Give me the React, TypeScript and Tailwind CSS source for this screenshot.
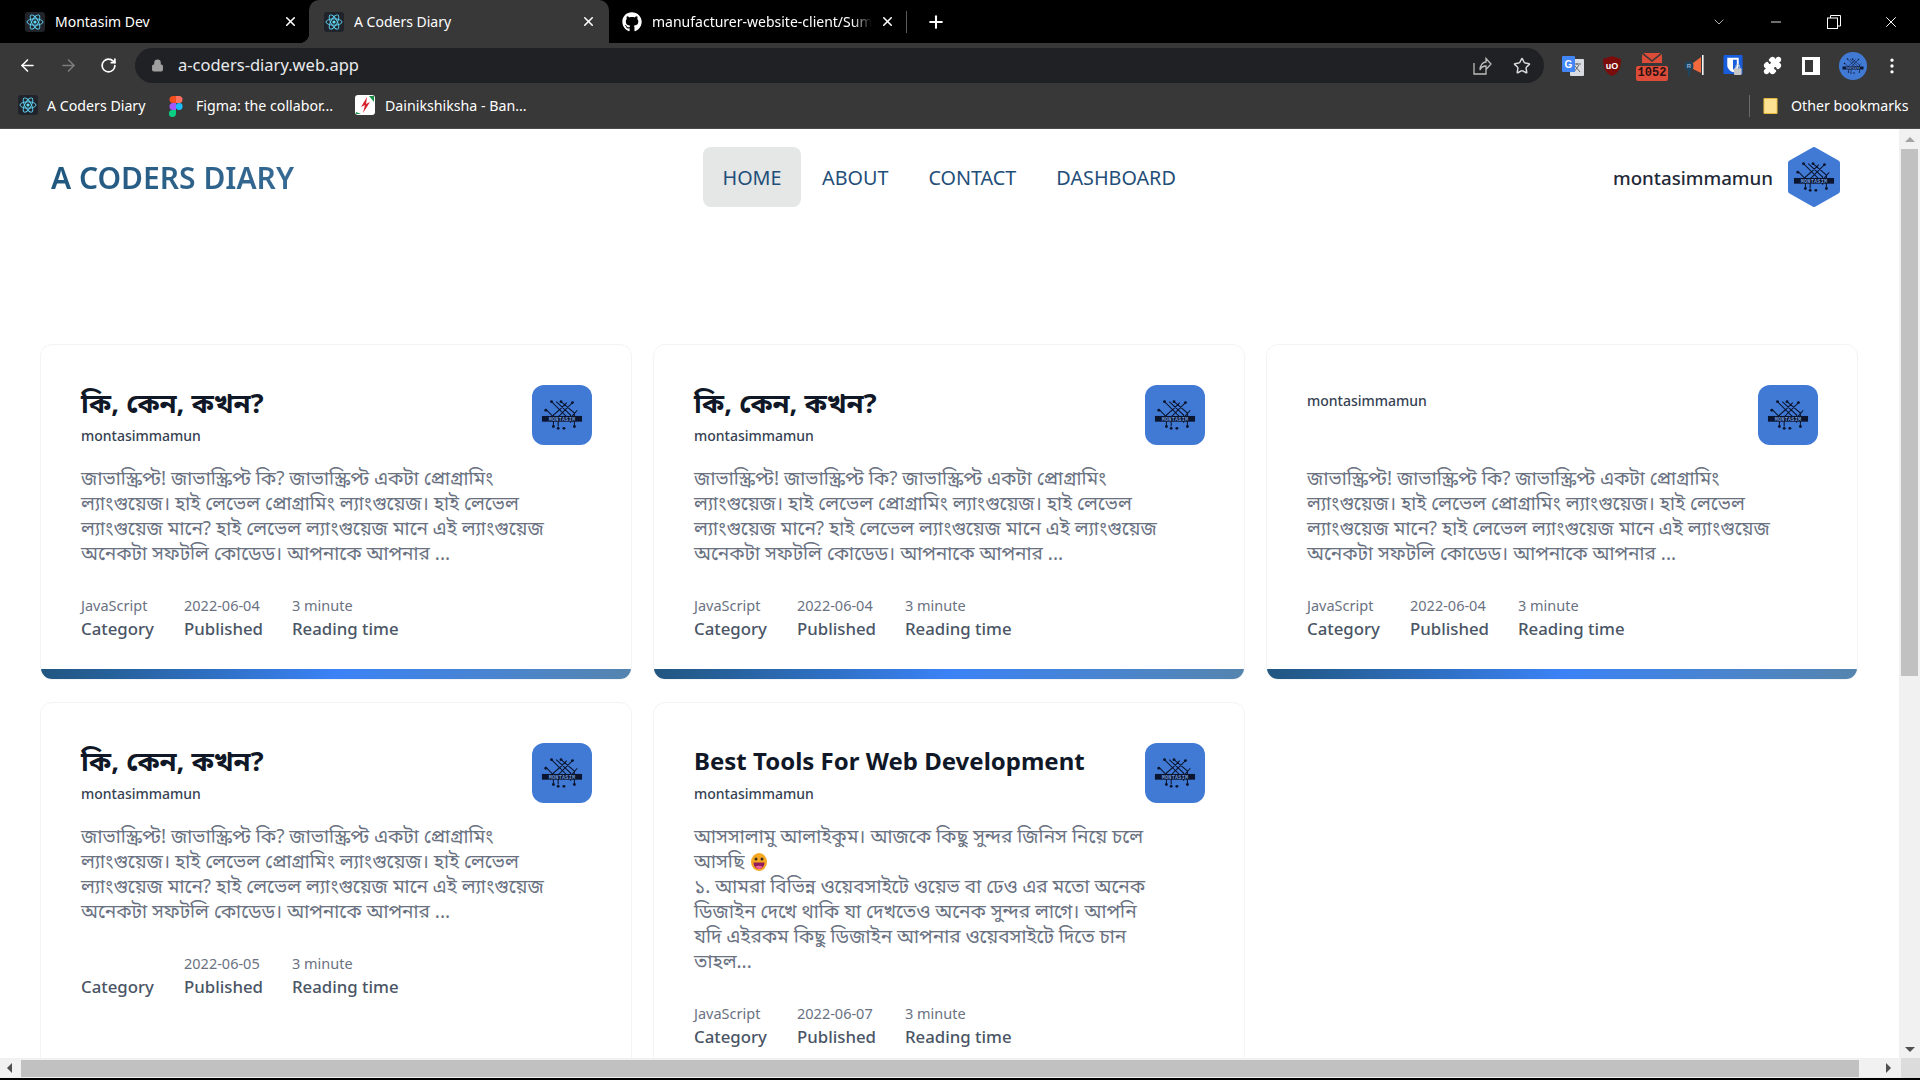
import * as React from 'react';
import { ArrowLeft, ArrowRight, RotateCw, Lock, X, Plus, Star, ChevronDown, Minus, Puzzle, MoreVertical } from 'lucide-react';
import { FaGithub } from 'react-icons/fa';

const uiFont = 'font-["Noto_Sans","Noto_Sans_Bengali","Lohit_Bengali","FreeSans",sans-serif]';

const AtomIcon = () => (
  <svg viewBox="0 0 20 20" className="h-5 w-5 shrink-0">
    <rect width="20" height="20" rx="3" fill="#20232a" />
    <g fill="none" stroke="#61dafb" strokeWidth="0.9">
      <ellipse cx="10" cy="10" rx="8" ry="3.2" />
      <ellipse cx="10" cy="10" rx="8" ry="3.2" transform="rotate(60 10 10)" />
      <ellipse cx="10" cy="10" rx="8" ry="3.2" transform="rotate(120 10 10)" />
    </g>
    <circle cx="10" cy="10" r="1.6" fill="#61dafb" />
  </svg>
);

const FigmaIcon = () => (
  <svg viewBox="0 0 14 22" className="h-[22px] w-[14px]">
    <path d="M7 1H4a3.5 3.5 0 0 0 0 7h3z" fill="#f24e1e" />
    <path d="M7 1h3a3.5 3.5 0 0 1 0 7H7z" fill="#ff7262" />
    <path d="M7 8H4a3.5 3.5 0 0 0 0 7h3z" fill="#a259ff" />
    <circle cx="10.2" cy="11.5" r="3.4" fill="#1abcfe" />
    <path d="M4 15h3v3.5A3.5 3.5 0 1 1 4 15z" fill="#0acf83" />
  </svg>
);

const DainikIcon = () => (
  <svg viewBox="0 0 20 20" className="h-5 w-5">
    <rect width="20" height="20" rx="3" fill="#fff" />
    <path d="M12 2 L6 12 L10 10 L8 18 L15 7 L11 9z" fill="#d81e28" />
    <path d="M14 1h5v6z" fill="#17914a" />
    <path d="M1 17l5 2H1z" fill="#17914a" />
  </svg>
);

// MONTASIM circuit logo, used on the avatars and the card thumbnails
const CircuitLogo = ({ className }: { className?: string }) => (
  <svg viewBox="0 0 44 32" className={className}>
    <g fill="none" stroke="#0b1530" strokeWidth="1.1">
      <path d="M11 2 L27 18 V22 M16 2 L31 16 V24 M21 2 L35 14 V27 M33 3 L24 12 L18 18 V28 M27 3 L20 10 L13 16 V27 M6 11 L13 18 M38 11 L32 18" />
    </g>
    <g fill="#0b1530">
      <circle cx="11" cy="2" r="1.5" />
      <circle cx="21" cy="2" r="1.5" />
      <circle cx="33" cy="3" r="1.5" />
      <circle cx="5" cy="11" r="1.5" />
      <circle cx="13" cy="28" r="1.5" />
      <circle cx="18" cy="30" r="1.5" />
      <circle cx="35" cy="28" r="1.5" />
      <circle cx="24" cy="30" r="1.5" />
    </g>
    <rect x="1" y="17" width="42" height="6" fill="#0b1530" />
    <text x="22" y="22" textAnchor="middle" fontSize="5.4" fontWeight="700" fontFamily="Liberation Mono, monospace" letterSpacing="0.25" fill="#6f97d8">
      MONTASIM
    </text>
  </svg>
);

const Tab = ({ icon, label, active, width, labelClass }: { icon: React.ReactNode; label: string; active?: boolean; width: string; labelClass?: string }) => (
  <div
    className={`relative flex h-[43px] shrink-0 items-center ${width} ${
      active
        ? "rounded-t-[10px] bg-[#383838] before:absolute before:bottom-0 before:left-[-10px] before:size-[10px] before:bg-[radial-gradient(circle_at_0_0,transparent_10px,#383838_10.5px)] before:content-[''] after:absolute after:bottom-0 after:right-[-10px] after:size-[10px] after:bg-[radial-gradient(circle_at_100%_0,transparent_10px,#383838_10.5px)] after:content-['']"
        : 'bg-black'
    }`}
  >
    {icon}
    <span className={`ml-[10px] flex-1 overflow-hidden whitespace-nowrap text-[14px] text-white ${labelClass ?? ''}`}>{label}</span>
    <X className="ml-2 h-[15px] w-[15px] shrink-0 text-white" strokeWidth={2.5} />
  </div>
);

const TabStrip = () => (
  <div className="flex h-[43px] shrink-0 items-center bg-black">
    <Tab width="w-[299px] ml-[10px] pl-[15px] pr-[11px]" icon={<AtomIcon />} label="Montasim Dev" />
    <Tab active width="w-[300px] pl-[15px] pr-[13px]" icon={<AtomIcon />} label="A Coders Diary" />
    <Tab
      width="w-[297px] pl-[13px] pr-[11px]"
      icon={<FaGithub className="h-5 w-5 shrink-0 text-white" />}
      label="manufacturer-website-client/Sum"
      labelClass="[mask-image:linear-gradient(to_left,transparent,black_20px)]"
    />
    <div className="h-[22px] w-px bg-[#5a5a5a]" />
    <Plus className="ml-[19px] h-[20px] w-[20px] text-white" strokeWidth={2.5} />
    <ChevronDown className="ml-[765px] h-[16px] w-[16px] text-[#d8d8d8]" strokeWidth={1.2} />
    <Minus className="ml-[41px] h-[16px] w-[16px] text-white" strokeWidth={1.3} />
    <svg viewBox="0 0 14 14" className="ml-[43px] h-[14px] w-[14px]" fill="none" stroke="#fff">
      <rect x="0.5" y="3" width="10" height="10.5" />
      <path d="M3.5 3V0.5h10V11h-3" />
    </svg>
    <X className="ml-[41px] h-[18px] w-[18px] text-white" strokeWidth={1.3} />
  </div>
);

const ToolbarExtensions = () => (
  <div className="flex items-center">
    {/* translate */}
    <svg viewBox="0 0 22 22" className="ml-[18px] h-[22px] w-[22px]">
      <rect x="8" y="4" width="14" height="17" rx="1" fill="#d9dde3" />
      <path d="M11 9h8M15 8v2M12 17l5-7M13 11l5 6" stroke="#666" fill="none" />
      <rect x="0" y="1" width="13" height="16" rx="1" fill="#4285f4" />
      <text x="6.5" y="12.5" textAnchor="middle" fontSize="10" fontWeight="700" fill="#fff" fontFamily="Liberation Sans, sans-serif">G</text>
    </svg>
    {/* ublock */}
    <svg viewBox="0 0 18 20" className="ml-[19px] h-[20px] w-[18px]">
      <path d="M9 0l9 3c0 8-2 14-9 17C2 17 0 11 0 3z" fill="#7a0c0c" />
      <text x="9" y="13" textAnchor="middle" fontSize="9" fontWeight="700" fill="#fff" fontFamily="Liberation Sans, sans-serif">uO</text>
    </svg>
    {/* mail + counter */}
    <div className="relative ml-[15px] h-[30px] w-[32px]">
      <svg viewBox="0 0 20 10" className="absolute left-[6px] top-[2px] h-[10px] w-[20px]">
        <path d="M0 0h20v10H0z" fill="#dd4b39" />
        <path d="M0 0l10 8 10-8" fill="none" stroke="#383838" strokeWidth="1.6" />
      </svg>
      <div className="absolute bottom-0 left-0 flex h-[15px] w-[32px] items-center justify-center rounded-[2px] bg-[#dd4b39] font-['Liberation_Mono',monospace] text-[12px] font-bold text-[#2a1210]">1052</div>
    </div>
    {/* megaphone */}
    <svg viewBox="0 0 20 22" className="ml-[16px] h-[22px] w-[20px]">
      <path d="M9 8l8-6v16l-8-4z" fill="#f26a3d" />
      <rect x="18" y="0" width="1.6" height="20" fill="#f5f5f5" />
      <circle cx="5" cy="11" r="4.5" fill="#1d4560" />
      <rect x="4" y="14" width="2" height="7" fill="#1d4560" />
      <text x="5" y="13" textAnchor="middle" fontSize="6" fontWeight="700" fill="#9ac" fontFamily="Liberation Sans, sans-serif">R</text>
    </svg>
    {/* bitwarden */}
    <svg viewBox="0 0 20 22" className="ml-[19px] h-[21px] w-[20px]">
      <rect width="20" height="20" rx="1" fill="#175ddc" />
      <path d="M4 3h12v8c0 3-3 6-6 7-3-1-6-4-6-7z" fill="#fff" />
      <path d="M10 5h4v6c0 2-2 3.500-4 4.500z" fill="#175ddc" />
      <rect x="11" y="14" width="8" height="7" rx="1" fill="#c8c8c8" />
      <path d="M13 14v-2a2 2 0 0 1 4 0v2" stroke="#c8c8c8" fill="none" />
    </svg>
    <Puzzle className="ml-[20px] h-[19px] w-[19px] fill-white text-white" />
    <div className="ml-[20px] h-[18px] w-[18px] border-[3px] border-r-[7px] border-white" />
    <div className="ml-[19px] flex h-[28px] w-[28px] items-center justify-center rounded-full bg-[#417ad4]">
      <CircuitLogo className="h-[16px] w-[22px]" />
    </div>
    <MoreVertical className="ml-[15px] h-[20px] w-[20px] text-white" />
  </div>
);

const Toolbar = () => (
  <div className="flex h-[43px] shrink-0 items-center bg-[#383838] pl-[18px] pt-[2px]">
    <ArrowLeft className="h-[19px] w-[19px] text-white" />
    <ArrowRight className="ml-[22px] h-[19px] w-[19px] text-[#7c7c7c]" />
    <RotateCw className="ml-[22px] h-[17px] w-[17px] text-white" strokeWidth={2.4} />
    <div className="ml-[18px] flex h-[35px] w-[1409px] items-center rounded-full bg-[#202124] pl-[16px] pr-[13px]">
      <Lock className="h-[13px] w-[13px] fill-[#a0a0a0] text-[#a0a0a0]" />
      <span className="ml-[14px] flex-1 text-[16.5px] text-[#e8eaed]">a-coders-diary.web.app</span>
      <svg viewBox="0 0 20 20" className="h-[20px] w-[20px]" fill="none" stroke="#bdbdbd" strokeWidth="1.3">
        <path d="M2 7v11h12v-4M8 14c0-5 3-8 6-8V2.500l5 5.500-5 5.500V10c-3 0-5 1-6 4z" />
      </svg>
      <Star className="ml-[21px] h-[18px] w-[18px] text-[#d8d8d8]" strokeWidth={2} />
    </div>
    <ToolbarExtensions />
  </div>
);

const BookmarkBar = () => (
  <div className="flex h-[43px] shrink-0 items-center border-b border-[#4a4a4a] bg-[#383838] pb-[3px] text-[14.2px] text-white">
    <div className="ml-[18px] flex w-[151px] items-center gap-[9px] whitespace-nowrap">
      <AtomIcon />
      A Coders Diary
    </div>
    <div className="flex w-[186px] items-center gap-[13px] whitespace-nowrap">
      <FigmaIcon />
      Figma: the collabor...
    </div>
    <div className="flex w-[1394px] items-center gap-[10px] whitespace-nowrap">
      <DainikIcon />
      Dainikshiksha - Ban...
    </div>
    <div className="h-[22px] w-px bg-[#6a6a6a]" />
    <svg viewBox="0 0 16 18" className="ml-[13px] h-[18px] w-[15px]">
      <path d="M1 1h14v16H1z" fill="#fde293" stroke="#e8b93a" />
    </svg>
    <span className="ml-[13px] whitespace-nowrap">Other bookmarks</span>
  </div>
);

const NavBar = () => (
  <nav className="flex h-[60px] items-center pr-[57px]">
    <a className="ml-[51px] w-[652px] bg-gradient-to-r from-[#20577f] to-[#5a8bb8] bg-clip-text text-[30px] font-semibold text-transparent">A CODERS DIARY</a>
    <div className="flex items-center text-[19.8px] text-[#1f4e79]">
      <a className="flex h-[60px] w-[98px] items-center justify-center rounded-lg bg-[#e5e6e6] pt-[2px]">HOME</a>
      <a className="ml-[1px] px-5 pt-[2px]">ABOUT</a>
      <a className="px-5 pt-[2px]">CONTACT</a>
      <a className="px-5 pt-[2px]">DASHBOARD</a>
    </div>
    <span className="ml-auto pt-[2px] text-[18.7px] font-medium text-[#1f2937]">montasimmamun</span>
    <div className="ml-[13px] grid h-[60px] w-[56px] place-items-center">
      <svg viewBox="0 0 56 60" className="col-start-1 row-start-1 h-[60px] w-[56px]">
        <path d="M28 3 L51 16 V44 L28 57 L5 44 V16 Z" fill="#417ad4" stroke="#417ad4" strokeWidth="6" strokeLinejoin="round" />
      </svg>
      <CircuitLogo className="col-start-1 row-start-1 h-[32px] w-[42px]" />
    </div>
  </nav>
);

const javascriptBody = (
  <>
    জাভাস্ক্রিপ্ট! জাভাস্ক্রিপ্ট কি? জাভাস্ক্রিপ্ট একটা প্রোগ্রামিং
    <br />
    ল্যাংগুয়েজ। হাই লেভেল প্রোগ্রামিং ল্যাংগুয়েজ। হাই লেভেল
    <br />
    ল্যাংগুয়েজ মানে? হাই লেভেল ল্যাংগুয়েজ মানে এই ল্যাংগুয়েজ
    <br />
    অনেকটা সফটলি কোডেড। আপনাকে আপনার ...
  </>
);

const toolsBody = (
  <>
    আসসালামু আলাইকুম। আজকে কিছু সুন্দর জিনিস নিয়ে চলে
    <br />
    আসছি{' '}
    <svg viewBox="0 0 16 18" className="ml-[2px] inline h-[18px] w-[16px] align-[-3px]">
      <ellipse cx="8" cy="9" rx="8" ry="9" fill="#f7a823" />
      <circle cx="5" cy="6" r="1.5" fill="#3a2a20" />
      <circle cx="11" cy="6" r="1.5" fill="#3a2a20" />
      <path d="M2.500 9.500h11c0 4-2.500 6.500-5.500 6.500s-5.500-2.500-5.500-6.500z" fill="#8e1f5c" />
      <path d="M4.500 13.500c2-1 5-1 7 0-1 1.500-2 2.500-3.500 2.500s-2.500-1-3.500-2.500z" fill="#f0609a" />
    </svg>
    <br />
    ১. আমরা বিভিন্ন ওয়েবসাইটে ওয়েভ বা ঢেও এর মতো অনেক
    <br />
    ডিজাইন দেখে থাকি যা দেখতেও অনেক সুন্দর লাগে। আপনি
    <br />
    যদি এইরকম কিছু ডিজাইন আপনার ওয়েবসাইটে দিতে চান
    <br />
    তাহল...
  </>
);

type Post = { title: string; body: React.ReactNode; category: string; date: string; latin?: boolean };

const posts: Post[] = [
  { title: 'কি, কেন, কখন?', body: javascriptBody, category: 'JavaScript', date: '2022-06-04' },
  { title: 'কি, কেন, কখন?', body: javascriptBody, category: 'JavaScript', date: '2022-06-04' },
  { title: '', body: javascriptBody, category: 'JavaScript', date: '2022-06-04' },
  { title: 'কি, কেন, কখন?', body: javascriptBody, category: '', date: '2022-06-05' },
  { title: 'Best Tools For Web Development', body: toolsBody, category: 'JavaScript', date: '2022-06-07', latin: true },
];

const Meta = ({ value, label, width }: { value: string; label: string; width: string }) => (
  <div className={`whitespace-nowrap ${width}`}>
    <p className="h-[20px] text-[14.5px] leading-[20px] text-gray-500">{value}</p>
    <p className="text-[16.8px] font-medium leading-[27px] text-gray-600">{label}</p>
  </div>
);

const PostCard = ({ post }: { post: Post }) => (
  <article className="flex flex-col overflow-hidden rounded-xl border border-gray-100 bg-white">
    <div className="flex-1 pb-[27px] pl-10 pr-[39px] pt-10">
      <div className="flex h-[60px] justify-between">
        <div>
          {post.title ? (
            <h2 className={`mb-[3px] whitespace-nowrap font-bold leading-[36px] text-gray-900 ${post.latin ? 'text-[24px]' : 'text-[27.5px]'}`}>{post.title}</h2>
          ) : (
            <div className="h-[4px]" />
          )}
          <p className="text-[14px] font-medium leading-[24px] text-gray-700">montasimmamun</p>
        </div>
        <div className="flex h-[60px] w-[60px] items-center justify-center rounded-xl bg-[#417ad4]">
          <CircuitLogo className="h-[32px] w-[42px]" />
        </div>
      </div>
      <p className="mt-[21px] whitespace-nowrap text-[19px] leading-[25px] text-gray-500">{post.body}</p>
      <div className="mt-[29px] flex">
        <Meta value={post.category} label="Category" width="w-[103px]" />
        <Meta value={post.date} label="Published" width="w-[108px]" />
        <Meta value="3 minute" label="Reading time" width="w-[140px]" />
      </div>
    </div>
    <div className="h-[10px] bg-gradient-to-r from-[#215680] via-[#3b82f6] to-[#5584ae]" />
  </article>
);

const VerticalScrollbar = () => (
  <div className="flex w-[21px] shrink-0 flex-col items-center bg-[#f1f1f1]">
    <div className="mt-[8px] h-0 w-0 border-x-[5px] border-b-[5px] border-x-transparent border-b-[#a3a3a3]" />
    <div className="mt-[7px] h-[527px] w-[17px] bg-[#c1c1c1]" />
    <div className="mt-auto mb-[6px] h-0 w-0 border-x-[5px] border-t-[5px] border-x-transparent border-t-[#505050]" />
  </div>
);

const HorizontalScrollbar = () => (
  <div className="flex h-[20px] shrink-0 items-center bg-[#f1f1f1]">
    <div className="ml-[7px] h-0 w-0 border-y-[5px] border-r-[5px] border-y-transparent border-r-[#505050]" />
    <div className="ml-[9px] h-[17px] w-[1838px] bg-[#c1c1c1]" />
    <div className="ml-[27px] h-0 w-0 border-y-[5px] border-l-[5px] border-y-transparent border-l-[#505050]" />
    <div className="ml-[10px] h-full flex-1 bg-[#dcdcdc]" />
  </div>
);

export default function App() {
  return (
    <div className={`flex h-[1080px] w-[1920px] flex-col overflow-hidden bg-black ${uiFont}`}>
      <TabStrip />
      <Toolbar />
      <BookmarkBar />
      <div className="flex min-h-0 flex-1 bg-white">
        <main className="min-w-0 flex-1 overflow-hidden pt-[18px]">
          <NavBar />
          <section className="ml-[40px] mt-[137px] grid w-[1818px] grid-cols-3 gap-x-[21px] gap-y-[22px]">
            {posts.map((post, i) => (
              <PostCard key={i} post={post} />
            ))}
          </section>
        </main>
        <VerticalScrollbar />
      </div>
      <HorizontalScrollbar />
      <div className="h-[2px] shrink-0 bg-black" />
    </div>
  );
}
